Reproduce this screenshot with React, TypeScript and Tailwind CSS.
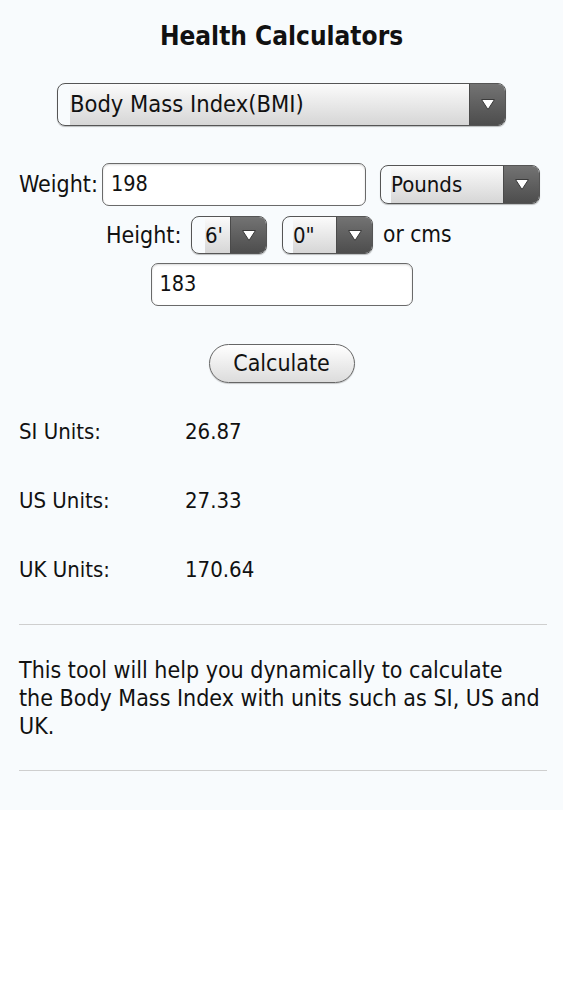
import React from "react";

function Arrow() {
    return (
        <svg width="16" height="13" viewBox="0 0 16 13">
            <path d="M1.5 1.5 H14.5 L8 11.5 Z" fill="#ffffff" stroke="#3a3a3a" strokeWidth="1" strokeLinejoin="round"/>
        </svg>
    );
}

function FakeSelect({label, className}: {label: string, className: string}) {
    return (
        <div className={`flex overflow-hidden rounded-[8px] border border-[#555] shadow-[0_1px_1px_rgba(0,0,0,0.25)] ${className}`}>
            <div className="flex flex-1 items-center bg-gradient-to-b from-[#fbfbfb] to-[#d6d6d6] text-[#111]">
                {label}
            </div>
            <div className="flex w-[36px] items-center justify-center border-l border-[#4a4a4a] bg-gradient-to-b from-[#737373] to-[#4d4d4d]">
                <Arrow/>
            </div>
        </div>
    );
}

function TextBox({value, className}: {value: string, className: string}) {
    return (
        <div className={`flex items-center rounded-[7px] border-[1.5px] border-[#6a6a6a] bg-white pl-[8px] text-[21.5px] text-[#111] shadow-[inset_0_1px_2px_rgba(0,0,0,0.15)] ${className}`}>
            {value}
        </div>
    );
}

const results = [
    {label: "SI Units:", value: "26.87"},
    {label: "US Units:", value: "27.33"},
    {label: "UK Units:", value: "170.64"},
];

export default function App() {
    return (
        <div className="min-h-screen bg-white font-['DejaVu_Sans_Condensed','DejaVu_Sans',sans-serif] text-[#111]">
            <div className="bg-[#f8fbfd] pb-[39px] pt-[20px]">
                <h1 className="text-center text-[26px] font-bold leading-[32px]">Health Calculators</h1>

                <div className="mt-[31px] flex justify-center">
                    <FakeSelect label="Body Mass Index(BMI)" className="h-[43px] w-[449px] pl-[12px] text-[23.5px]"/>
                </div>

                <div className="mt-[37px] flex items-center pl-[19px]">
                    <span className="w-[83px] text-[23px]">Weight:</span>
                    <TextBox value="198" className="h-[43px] w-[264px]"/>
                    <FakeSelect label="Pounds" className="ml-[14px] h-[39px] w-[160px] pl-[10px] text-[22px]"/>
                </div>

                <div className="mt-[10px] flex items-center pl-[106px]">
                    <span className="w-[85px] text-[23px]">Height:</span>
                    <FakeSelect label="6'" className="h-[38px] w-[76px] pl-[13px] text-[22px]"/>
                    <FakeSelect label={'0"'} className="ml-[15px] h-[38px] w-[91px] pl-[10px] text-[22px]"/>
                    <span className="ml-[10px] text-[22.5px]">or cms</span>
                </div>

                <div className="mt-[9px] flex justify-center">
                    <TextBox value="183" className="h-[43px] w-[262px]"/>
                </div>

                <div className="mt-[38px] flex justify-center">
                    <button className="h-[39px] w-[146px] rounded-full border-[1.5px] border-[#666] bg-gradient-to-b from-[#ffffff] to-[#dcdcdc] text-[23px] text-[#111] shadow-[0_1px_1px_rgba(0,0,0,0.2)]">
                        Calculate
                    </button>
                </div>

                <div className="mt-[32px] px-[19px]">
                    {results.map((r) => (
                        <div key={r.label} className="flex h-[69px] items-start text-[22px] leading-[34px]">
                            <span className="w-[166px]">{r.label}</span>
                            <span>{r.value}</span>
                        </div>
                    ))}
                </div>

                <div className="ml-[19px] mr-[16px] mt-[2px] border-t border-[#cfcfcf]"/>

                <p className="ml-[19px] mr-[4px] mt-[31px] text-[23px] leading-[28px]">
                    This tool will help you dynamically to calculate<br/>
                    the Body Mass Index with units such as SI, US and UK.
                </p>

                <div className="ml-[19px] mr-[16px] mt-[30px] border-t border-[#cfcfcf]"/>
            </div>
        </div>
    );
}
